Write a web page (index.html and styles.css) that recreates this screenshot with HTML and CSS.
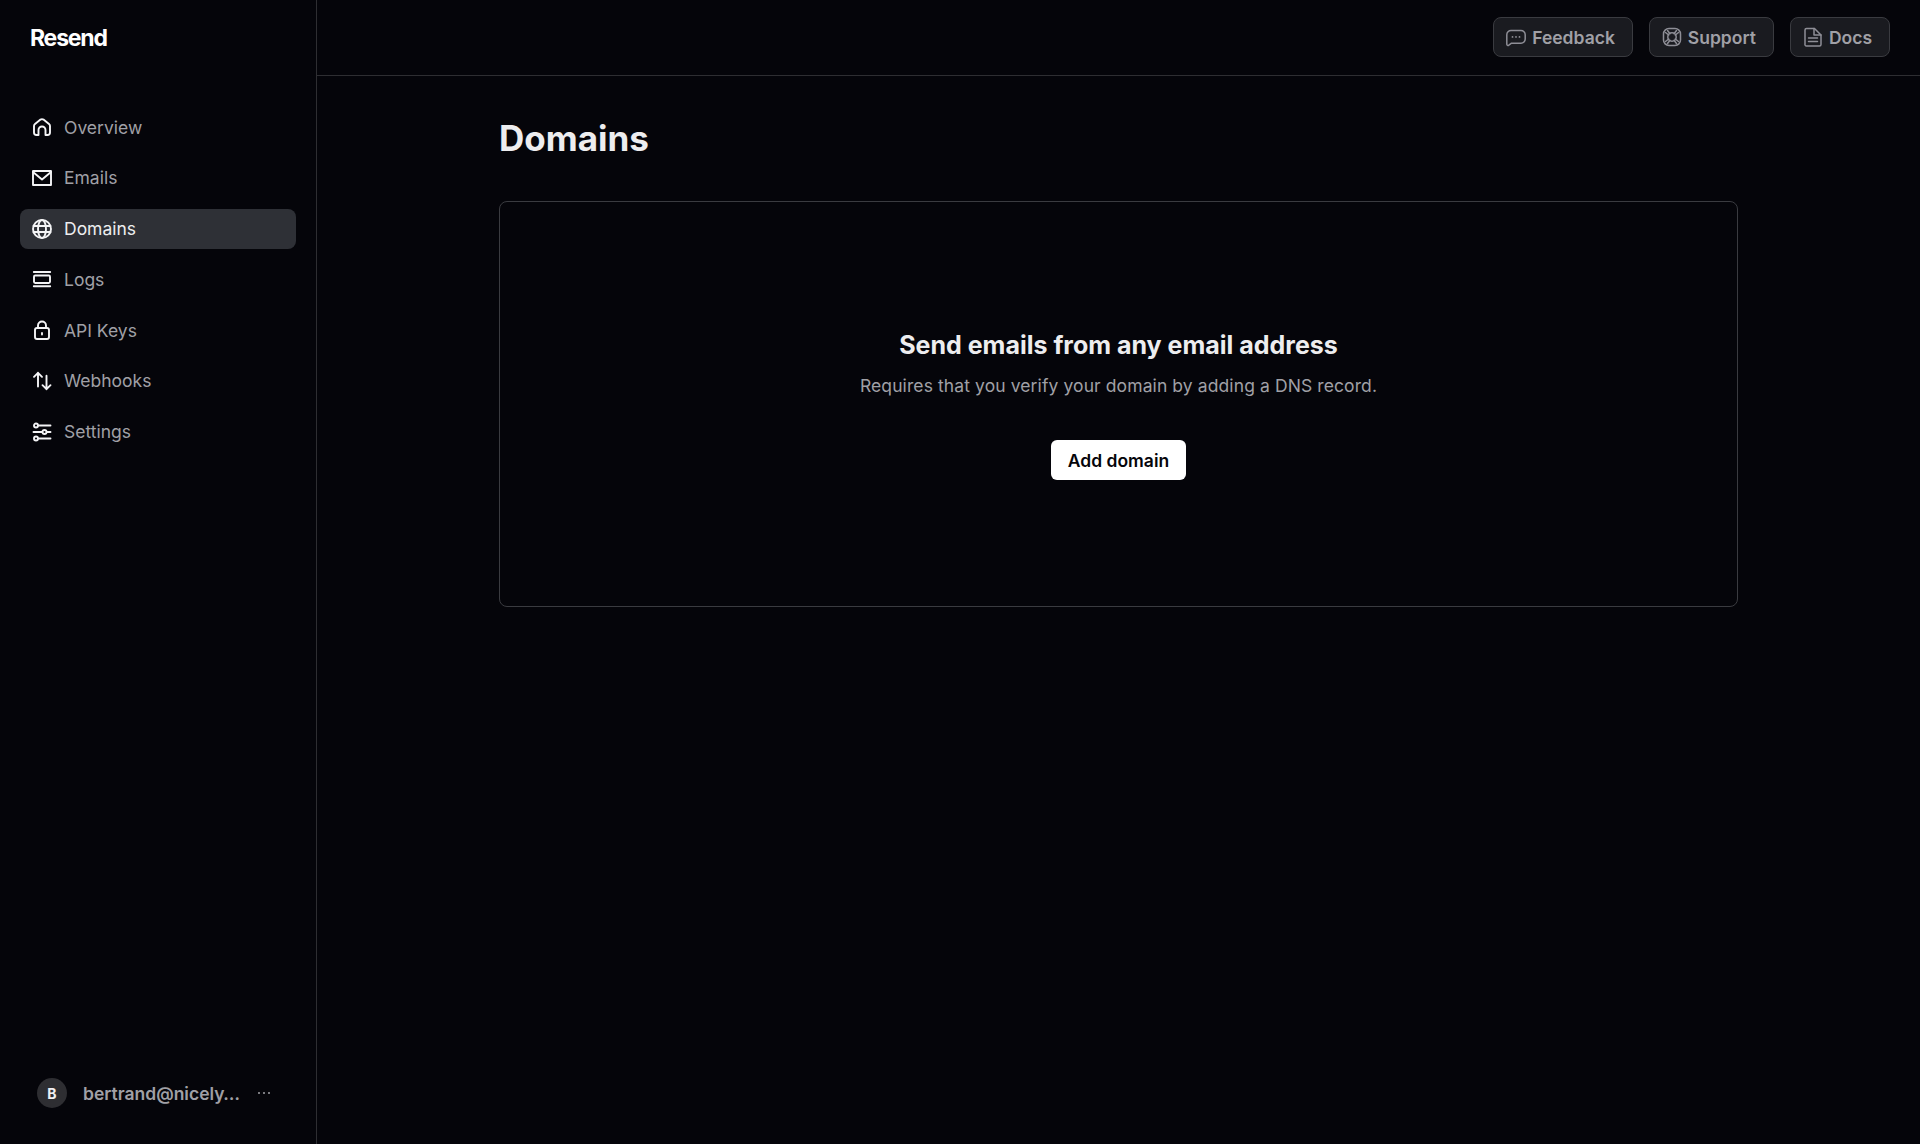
FILE: index.html
```html
<!DOCTYPE html>
<html lang="en">
<head>
    <meta charset="UTF-8">
    <title>Domains · Resend</title>
    <link rel="stylesheet" href="styles.css">
</head>
<body>
    <aside class="sidebar">
        <div class="logo">Resend</div>
        <nav class="nav">
            <a class="nav-item">
                <svg class="nav-icon" viewBox="0 0 20 20"><path d="M2 9q0-1.200 1-2l5.500-4.400q1.500-1 3 0L17 7q1 .8 1 2v6.500a2.500 2.500 0 0 1-2.500 2.500h-2v-5a3.500 3.500 0 0 0-7 0v5h-2A2.500 2.500 0 0 1 2 15.500z"/></svg>
                Overview
            </a>
            <a class="nav-item">
                <svg class="nav-icon" viewBox="0 0 20 20"><rect x="1" y="3" width="18" height="14"/><path d="M1 4l9 7.500L19 4"/></svg>
                Emails
            </a>
            <a class="nav-item active">
                <svg class="nav-icon" viewBox="0 0 20 20"><circle cx="10" cy="10" r="9"/><ellipse cx="10" cy="10" rx="4" ry="9"/><path d="M1.500 7h17M1.500 13h17"/></svg>
                Domains
            </a>
            <a class="nav-item">
                <svg class="nav-icon" viewBox="0 0 20 20"><path d="M1.800 3h16.400M1.800 17.300h16.400"/><rect x="2" y="6.500" width="16" height="7.500" rx="1.200"/></svg>
                Logs
            </a>
            <a class="nav-item">
                <svg class="nav-icon" viewBox="0 0 20 20"><rect x="3" y="8" width="14" height="11" rx="2"/><path d="M6 8V5.500a4 4 0 0 1 8 0V8M10 13v1.500"/></svg>
                API Keys
            </a>
            <a class="nav-item">
                <svg class="nav-icon" viewBox="0 0 20 20"><path d="M6 15.500V1.800M2 5.800l4-4 4 4M14.500 4.800v13.400M10.500 14.200l4 4 4-4"/></svg>
                Webhooks
            </a>
            <a class="nav-item">
                <svg class="nav-icon" viewBox="0 0 20 20"><path d="M6.500 3.500H18.500M1.500 10h8.500M15 10h3.500M6.500 16.500H18.500"/><circle cx="4" cy="3.500" r="2"/><circle cx="12.500" cy="10" r="2"/><circle cx="4" cy="16.500" r="2"/></svg>
                Settings
            </a>
        </nav>
        <div class="account">
            <span class="avatar">B</span>
            <span class="account-email">bertrand@nicely…</span>
            <svg class="more" viewBox="0 0 14 4"><circle cx="2" cy="2" r="1"/><circle cx="7" cy="2" r="1"/><circle cx="12" cy="2" r="1"/></svg>
        </div>
    </aside>

    <div class="main">
        <header class="topbar">
            <a class="top-btn">
                <svg class="btn-icon" viewBox="0 0 20 20"><path d="M5 3.500h10A4.200 4.200 0 0 1 19.200 7.700v4.300a4.200 4.200 0 0 1-4.200 4.200H5.500L2.800 18.200A1.200 1.200 0 0 1 .8 17.300V7.700A4.200 4.200 0 0 1 5 3.500z"/><path class="dots" d="M6.500 9.900h.01M10 9.900h.01M13.500 9.900h.01"/></svg>
                Feedback
            </a>
            <a class="top-btn">
                <svg class="btn-icon" viewBox="0 0 20 20"><rect x="1.500" y="1.500" width="17" height="17" rx="5.500"/><circle cx="10" cy="10" r="4.200"/><path d="M3.500 5.500l3.200 2.500M5.500 3.500l2.500 3.200M16.500 5.500l-3.200 2.500M14.500 3.500l-2.500 3.200M3.500 14.500l3.200-2.500M5.500 16.500l2.500-3.200M16.500 14.500l-3.200-2.500M14.500 16.500l-2.500-3.200"/></svg>
                Support
            </a>
            <a class="top-btn">
                <svg class="btn-icon" viewBox="0 0 20 20"><path d="M2 3a1.500 1.500 0 0 1 1.500-1.500H11.500l6.500 6.500v9.500a1.500 1.500 0 0 1-1.500 1.500h-13A1.500 1.500 0 0 1 2 17z"/><path d="M11 1.500V8h7M5.500 11h9M5.500 14.500h9"/></svg>
                Docs
            </a>
        </header>

        <main class="content">
            <h1>Domains</h1>
            <section class="empty-card">
                <h2>Send emails from any email address</h2>
                <p>Requires that you verify your domain by adding a DNS record.</p>
                <a class="primary-btn">Add domain</a>
            </section>
        </main>
    </div>
</body>
</html>
```

FILE: styles.css
```css
* {
    margin: 0;
    padding: 0;
    box-sizing: border-box;
}

html, body {
    height: 100%;
}

body {
    display: flex;
    font-family: Inter, "Liberation Sans", sans-serif;
    background-color: #05050a;
    color: #ededef;
    overflow: hidden;
}

.sidebar {
    width: 317px;
    flex-shrink: 0;
    display: flex;
    flex-direction: column;
    border-right: 1px solid #2e2e32;
    padding: 0 20px;
}

.logo {
    height: 75px;
    padding-left: 10px;
    display: flex;
    align-items: center;
    font-size: 23px;
    font-weight: 700;
    letter-spacing: -1.2px;
    color: #fff;
}

.nav {
    display: flex;
    flex-direction: column;
    gap: 10.75px;
    margin-top: 32px;
}

.nav-item {
    height: 40px;
    display: flex;
    align-items: center;
    gap: 12px;
    padding-left: 12px;
    border-radius: 8px;
    font-size: 17.5px;
    color: #a0a0a6;
}

.nav-item.active {
    background: #2e3036;
    color: #ededef;
}

.nav-icon {
    width: 20px;
    height: 20px;
    fill: none;
    stroke: #f4f4f6;
    stroke-width: 1.900;
    stroke-linecap: round;
    stroke-linejoin: round;
}

.account {
    margin-top: auto;
    margin-bottom: 35px;
    padding-left: 17px;
    height: 32px;
    display: flex;
    align-items: center;
}

.avatar {
    width: 30px;
    height: 30px;
    border-radius: 50%;
    flex-shrink: 0;
    background: #2e2e32;
    color: #f0f0f2;
    font-size: 14px;
    font-weight: 700;
    display: flex;
    align-items: center;
    justify-content: center;
}

.account-email {
    width: 158px;
    margin-left: 16px;
    font-size: 17.5px;
    font-weight: 600;
    color: #a0a0a6;
    white-space: nowrap;
}

.more {
    width: 14px;
    height: 4px;
    margin-left: 16px;
    fill: #a0a0a6;
}

.main {
    flex: 1;
    display: flex;
    flex-direction: column;
}

.topbar {
    height: 76px;
    flex-shrink: 0;
    display: flex;
    justify-content: flex-end;
    gap: 16px;
    padding: 17px 30px 0 0;
    border-bottom: 1px solid #2e2e32;
}

.top-btn {
    height: 40px;
    display: flex;
    align-items: center;
    gap: 6px;
    padding: 0 17px 0 12px;
    background: #1a1b20;
    border: 1px solid #3a3b40;
    border-radius: 8px;
    font-size: 17.5px;
    font-weight: 600;
    color: #a0a0a6;
}

.btn-icon {
    width: 20px;
    height: 20px;
    fill: none;
    stroke: #8e8e96;
    stroke-width: 1.500;
    stroke-linecap: round;
    stroke-linejoin: round;
}

.btn-icon .dots {
    stroke-width: 1.800;
}

.content {
    width: 1239px;
    margin-left: 182px;
}

h1 {
    font-size: 35px;
    font-weight: 700;
    line-height: 40px;
    margin-top: 42px;
}

.empty-card {
    height: 406px;
    margin-top: 43px;
    display: flex;
    flex-direction: column;
    align-items: center;
    border: 1px solid #3a3b40;
    border-radius: 8px;
    padding-top: 127px;
}

.empty-card h2 {
    font-size: 25px;
    font-weight: 700;
    line-height: 32px;
}

.empty-card p {
    font-size: 17.5px;
    letter-spacing: 0.1px;
    line-height: 28px;
    margin-top: 11px;
    color: #a0a0a6;
}

.primary-btn {
    height: 40px;
    margin-top: 40px;
    padding: 0 17px;
    display: flex;
    align-items: center;
    background: #fff;
    border-radius: 6px;
    font-size: 17.5px;
    font-weight: 600;
    color: #05050a;
}
```
